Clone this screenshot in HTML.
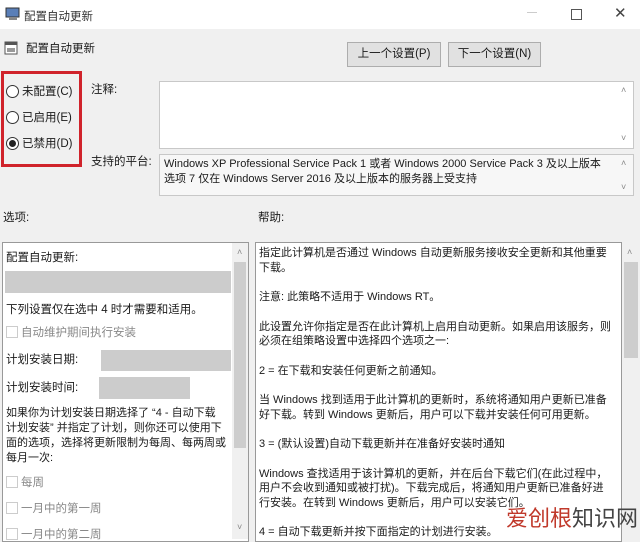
<!DOCTYPE html>
<html><head><meta charset="utf-8"><style>
*{margin:0;padding:0;box-sizing:border-box}
body{width:640px;height:539px;overflow:hidden;background:#f0f0f0;font-family:"Liberation Sans","Noto Sans CJK SC",sans-serif;font-size:11.5px;color:#1a1a1a;position:relative}
.a{position:absolute;white-space:nowrap}
.box{position:absolute;background:#fff;border:1px solid #c8c8c8}
.btn{position:absolute;background:#e1e1e1;border:1px solid #adadad;text-align:center;line-height:22px;font-size:11.5px}
.rad{position:absolute;width:13px;height:13px;border:1px solid #333;border-radius:50%;background:#fff}
.cb{position:absolute;width:12px;height:12px;border:1px solid #ccc;background:#fff}
.gray{color:#888}
.sb{position:absolute;background:#f0f0f0}
.thumb{position:absolute;background:#cdcdcd}
.arr{position:absolute;font-size:9px;color:#888}
.t{font-size:11px;line-height:15px}
</style></head><body>
<div class="a" style="left:0;top:0;width:640px;height:29px;background:#fff"></div>
<svg class="a" style="left:5px;top:7px" width="16" height="14"><rect x="1" y="1" width="13" height="9" fill="#5a7fb8" stroke="#333"/><rect x="4" y="10" width="8" height="3" fill="#888"/></svg>
<div class="a" style="left:24px;top:8px;font-size:11.5px;color:#333">配置自动更新</div>
<div class="a" style="left:527px;top:12px;width:10px;height:1px;background:#ccc"></div>
<div class="a" style="left:571px;top:9px;width:11px;height:11px;border:1px solid #555"></div>
<div class="a" style="left:614px;top:4px;font-size:15px;color:#444">✕</div>

<svg class="a" style="left:4px;top:41px" width="14" height="14"><rect x="1" y="1" width="12" height="12" fill="#fff" stroke="#555"/><rect x="1" y="1" width="12" height="3" fill="#555"/><rect x="3" y="7" width="8" height="4" fill="#999"/></svg>
<div class="a" style="left:26px;top:40px">配置自动更新</div>
<div class="btn" style="left:347px;top:42px;width:94px;height:25px">上一个设置(P)</div>
<div class="btn" style="left:448px;top:42px;width:93px;height:25px">下一个设置(N)</div>

<div class="a" style="left:1px;top:71px;width:81px;height:96px;border:3px solid #d0232b"></div>
<div class="rad" style="left:6px;top:85px"></div><div class="a" style="left:22px;top:83px">未配置(C)</div>
<div class="rad" style="left:6px;top:111px"></div><div class="a" style="left:22px;top:109px">已启用(E)</div>
<div class="rad" style="left:6px;top:137px"></div><div class="a" style="left:9px;top:140px;width:7px;height:7px;border-radius:50%;background:#222"></div><div class="a" style="left:22px;top:135px">已禁用(D)</div>

<div class="a" style="left:91px;top:81px">注释:</div>
<div class="box" style="left:159px;top:81px;width:475px;height:68px"></div>
<div class="arr" style="left:621px;top:85px">˄</div><div class="arr" style="left:621px;top:133px">˅</div>
<div class="a" style="left:91px;top:153px">支持的平台:</div>
<div class="box" style="left:159px;top:154px;width:475px;height:42px;background:#f7f7f7"></div>
<div class="a t" style="left:164px;top:157px">Windows XP Professional Service Pack 1 或者 Windows 2000 Service Pack 3 及以上版本<br>选项 7 仅在 Windows Server 2016 及以上版本的服务器上受支持</div>
<div class="arr" style="left:621px;top:158px">˄</div><div class="arr" style="left:621px;top:182px">˅</div>

<div class="a" style="left:3px;top:209px">选项:</div>
<div class="a" style="left:258px;top:209px">帮助:</div>

<div class="box" style="left:2px;top:242px;width:247px;height:300px;border-color:#999"></div>
<div class="sb" style="left:232px;top:243px;width:16px;height:296px"></div>
<div class="thumb" style="left:234px;top:262px;width:12px;height:186px"></div>
<div class="arr" style="left:237px;top:247px">˄</div><div class="arr" style="left:237px;top:522px">˅</div>
<div class="a" style="left:6px;top:249px">配置自动更新:</div>
<div class="a" style="left:5px;top:271px;width:226px;height:22px;background:#ccc"></div>
<div class="a" style="left:6px;top:301px">下列设置仅在选中 4 时才需要和适用。</div>
<div class="cb" style="left:6px;top:326px"></div><div class="a gray" style="left:21px;top:324px">自动维护期间执行安装</div>
<div class="a" style="left:6px;top:351px">计划安装日期:</div>
<div class="a" style="left:101px;top:350px;width:130px;height:21px;background:#ccc"></div>
<div class="a" style="left:6px;top:379px">计划安装时间:</div>
<div class="a" style="left:99px;top:377px;width:91px;height:22px;background:#ccc"></div>
<div class="a t" style="left:6px;top:406px">如果你为计划安装日期选择了 “4 - 自动下载<br>计划安装” 并指定了计划，则你还可以使用下<br>面的选项，选择将更新限制为每周、每两周或<br>每月一次:</div>
<div class="cb" style="left:6px;top:476px"></div><div class="a gray" style="left:21px;top:474px">每周</div>
<div class="cb" style="left:6px;top:502px"></div><div class="a gray" style="left:21px;top:500px">一月中的第一周</div>
<div class="cb" style="left:6px;top:528px"></div><div class="a gray" style="left:21px;top:526px">一月中的第二周</div>

<div class="box" style="left:255px;top:242px;width:367px;height:300px;border-color:#999"></div>
<div class="sb" style="left:622px;top:243px;width:18px;height:296px"></div>
<div class="thumb" style="left:624px;top:262px;width:14px;height:96px"></div>
<div class="arr" style="left:627px;top:247px">˄</div>
<div class="a" style="left:259px;top:246px;line-height:14.7px;font-size:11px">指定此计算机是否通过 Windows 自动更新服务接收安全更新和其他重要<br>下载。<br><br>注意: 此策略不适用于 Windows RT。<br><br>此设置允许你指定是否在此计算机上启用自动更新。如果启用该服务，则<br>必须在组策略设置中选择四个选项之一:<br><br> 2 = 在下载和安装任何更新之前通知。<br><br> 当 Windows 找到适用于此计算机的更新时，系统将通知用户更新已准备<br>好下载。转到 Windows 更新后，用户可以下载并安装任何可用更新。<br><br> 3 = (默认设置)自动下载更新并在准备好安装时通知<br><br> Windows 查找适用于该计算机的更新，并在后台下载它们(在此过程中，<br>用户不会收到通知或被打扰)。下载完成后，将通知用户更新已准备好进<br>行安装。在转到 Windows 更新后，用户可以安装它们。<br><br> 4 = 自动下载更新并按下面指定的计划进行安装。</div>
<div class="a" style="left:506px;top:506px;font-size:22px;color:#c0392b;line-height:26px">爱创根<span style="color:#444">知识网</span></div>
</body></html>
